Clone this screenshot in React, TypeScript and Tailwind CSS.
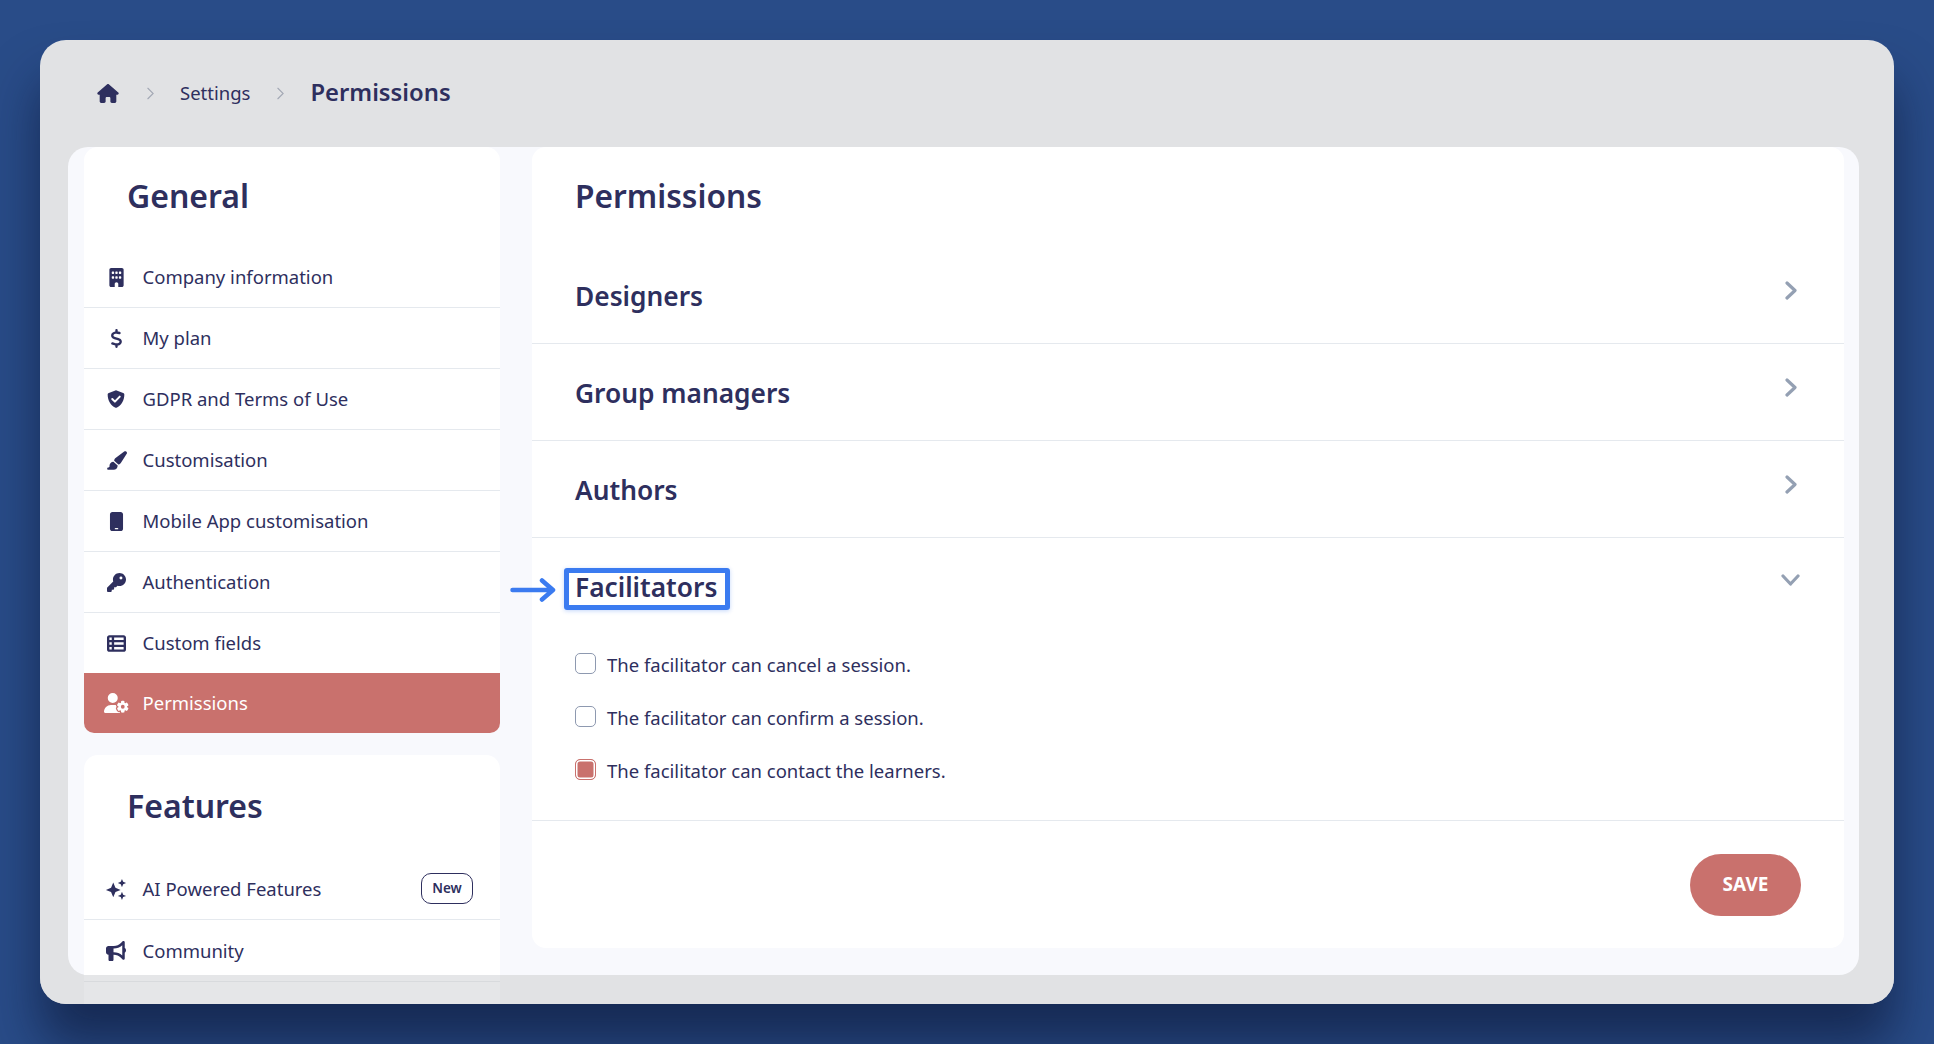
import type { ReactNode } from "react";
import {
  FaBuilding,
  FaBullhorn,
  FaDollarSign,
  FaHouse,
  FaKey,
  FaMobile,
  FaPaintbrush,
  FaTableList,
  FaUserGear,
} from "react-icons/fa6";

function ShieldCheckIcon() {
  return (
    <svg viewBox="0 0 24 24" className="h-[20px] w-[20px]">
      <path
        fill="currentColor"
        d="M12 1.500l8.600 3.200c.8.300 1.400 1 1.400 1.900 0 6.600-3.200 13-9.400 15.800-.4.200-.8.200-1.200 0C5.200 19.600 2 13.200 2 6.600c0-.9.600-1.600 1.400-1.900L12 1.500z"
      />
      <path d="M7.500 12l3.200 3.200 5.800-6" fill="none" stroke="#fff" strokeWidth="2.400" strokeLinecap="round" strokeLinejoin="round" />
    </svg>
  );
}

function SparklesIcon() {
  return (
    <svg viewBox="0 0 24 24" className="h-[22px] w-[22px]" fill="currentColor">
      <path d="M9 5l2.400 5.600L17 13l-5.600 2.400L9 21l-2.400-5.600L1 13l5.600-2.400z" />
      <path d="M18.500 1l1.300 3.200 3.200 1.300-3.200 1.300-1.300 3.200-1.300-3.200L14 5.500l3.200-1.300z" />
      <path d="M18.500 15l1.300 3.200 3.200 1.300-3.200 1.300-1.300 3.200-1.300-3.200-3.200-1.300 3.200-1.300z" />
    </svg>
  );
}

function CrumbChevron() {
  return (
    <svg viewBox="0 0 8 14" className="h-[13px] w-[7px]" fill="none" stroke="#a3a8b5" strokeWidth="1.300" strokeLinecap="round">
      <path d="M1 1l6 6-6 6" />
    </svg>
  );
}

function ChevronRight() {
  return (
    <svg viewBox="0 0 12 19" className="mb-[10px] h-[19px] w-[12px]" fill="none" stroke="#94a0b3" strokeWidth="3.200" strokeLinecap="round" strokeLinejoin="round">
      <path d="M2 2l8 7.500-8 7.500" />
    </svg>
  );
}

function ChevronDown() {
  return (
    <svg viewBox="0 0 19 13" className="mt-[6px] h-[13px] w-[19px]" fill="none" stroke="#94a0b3" strokeWidth="3.200" strokeLinecap="round" strokeLinejoin="round">
      <path d="M2 2l7.500 8L17 2" />
    </svg>
  );
}

const generalItems: { label: string; icon: ReactNode }[] = [
  { label: "Company information", icon: <FaBuilding className="h-[19px] w-[19px]" /> },
  { label: "My plan", icon: <FaDollarSign className="h-[19px] w-[19px]" /> },
  { label: "GDPR and Terms of Use", icon: <ShieldCheckIcon /> },
  { label: "Customisation", icon: <FaPaintbrush className="h-[19px] w-[21px]" /> },
  { label: "Mobile App customisation", icon: <FaMobile className="h-[19px] w-[19px]" /> },
  { label: "Authentication", icon: <FaKey className="h-[19px] w-[19px]" /> },
];

function NavRow({ icon, label, children }: { icon: ReactNode; label: string; children?: ReactNode }) {
  return (
    <div className="flex h-[61px] items-center gap-[13.500px] border-b border-[#e5e9ee] pl-[19px] pr-[27px]">
      <span className="flex w-[26px] justify-center">{icon}</span>
      <span className="flex-1 text-[18.500px]">{label}</span>
      {children}
    </div>
  );
}

function Section({ title }: { title: string }) {
  return (
    <div className="flex h-[97px] items-center justify-between border-b border-[#e5e9ee] pl-[43px] pr-[47px]">
      <h2 className="pt-[3px] text-[26.300px] font-semibold">{title}</h2>
      <ChevronRight />
    </div>
  );
}

function PermissionOption({ label, checked }: { label: string; checked?: boolean }) {
  return (
    <label className="flex h-[21px] items-center gap-[11px] text-[18.500px]">
      {checked ? (
        <span className="h-[21px] w-[21px] rounded-[5px] border border-[#c9716d] bg-[#c9716d] shadow-[inset_0_0_0_1.500px_#fff]" />
      ) : (
        <span className="h-[21px] w-[21px] rounded-[5px] border border-[#8e99b0] bg-white" />
      )}
      <span className="pt-[2px]">{label}</span>
    </label>
  );
}

export default function App() {
  return (
    <div className="h-screen overflow-hidden bg-[#294c88] pb-[40px] pl-[40px] pr-[40px] pt-[40px] font-['Noto_Sans',sans-serif] text-[#2e2f5e]">
      <div className="relative h-[964px] overflow-hidden rounded-[26px] bg-[#e1e2e4] shadow-[0_40px_50px_rgba(10,20,50,0.6)]">
        {/* breadcrumb */}
        <div className="flex h-[107px] items-center pl-[57px]">
          <FaHouse className="h-[19px] w-[22px]" />
          <span className="ml-[28px] flex"><CrumbChevron /></span>
          <span className="ml-[26px] pb-[2px] text-[18.500px]">Settings</span>
          <span className="ml-[27px] flex"><CrumbChevron /></span>
          <span className="ml-[26px] pb-[1px] text-[23.800px] font-semibold">Permissions</span>
        </div>

        <div className="ml-[28px] mr-[35px] flex h-[828px] gap-[32px] rounded-[20px] bg-[#f8f9fd] pl-[16px] pr-[15px]">
          {/* sidebar */}
          <div className="flex w-[416px] flex-none flex-col gap-[22px]">
            <div className="rounded-t-[14px] rounded-b-[10px] bg-white">
              <h2 className="flex h-[100px] items-center pb-[2px] pl-[43px] text-[32px] font-semibold">General</h2>
              {generalItems.map((item) => (
                <NavRow key={item.label} icon={item.icon} label={item.label} />
              ))}
              <div className="flex h-[60px] items-center gap-[13.500px] pl-[19px]">
                <span className="flex w-[26px] justify-center"><FaTableList className="h-[19px] w-[19px]" /></span>
                <span className="text-[18.500px]">Custom fields</span>
              </div>
              <div className="flex h-[60px] items-center gap-[13.500px] rounded-b-[10px] bg-[#c9716d] pl-[19px] text-white">
                <span className="flex w-[26px] justify-center"><FaUserGear className="h-[20px] w-[25px]" /></span>
                <span className="text-[18.500px]">Permissions</span>
              </div>
            </div>

            <div className="rounded-t-[14px] bg-white">
              <h2 className="flex h-[104px] items-center pb-[3px] pl-[43px] text-[32px] font-semibold">Features</h2>
              <NavRow icon={<SparklesIcon />} label="AI Powered Features">
                <span className="mb-[1px] flex h-[31px] w-[52px] items-center justify-center rounded-[10px] border-[1.500px] border-[#2e2f5e] text-[13.500px] font-semibold">
                  New
                </span>
              </NavRow>
              <div className="flex h-[62px] items-center gap-[13.500px] border-b border-[#a8acb2] pl-[19px]">
                <span className="flex w-[26px] justify-center"><FaBullhorn className="h-[20px] w-[20px]" /></span>
                <span className="text-[18.500px]">Community</span>
              </div>
              {/* next row, only the top of its icon shows before the window ends */}
              <div className="flex h-[61px] items-center pl-[19px]">
                <span className="flex w-[26px] justify-center"><span className="h-[18px] w-[18px] rounded-[4px] bg-[#2e2f5e]" /></span>
              </div>
            </div>
          </div>

          {/* permissions panel */}
          <div className="h-[801px] flex-1 rounded-[14px] bg-white">
            <h1 className="flex h-[100px] items-center pb-[2px] pl-[43px] text-[31.700px] font-semibold">Permissions</h1>
            <Section title="Designers" />
            <Section title="Group managers" />
            <Section title="Authors" />

            <div className="h-[283px] border-b border-[#e5e9ee] pl-[43px] pr-[44px] pt-[30px]">
              <div className="flex items-start justify-between">
                <div className="relative -ml-[11px] flex h-[42px] items-center rounded-[3px] border-[5px] border-[#3b7bf0] pb-[3px] pl-[6px] pr-[8px] shadow-[0_1px_4px_rgba(59,123,240,0.3)]">
                  <h2 className="text-[26.300px] font-semibold">Facilitators</h2>
                  <svg viewBox="0 0 46 24" className="absolute -left-[59px] top-[5px] h-[24px] w-[46px]" fill="none" stroke="#3b7bf0" strokeWidth="4.500" strokeLinecap="round" strokeLinejoin="round">
                    <path d="M2.500 12h40M32 2.500L43 12 32 21.500" />
                  </svg>
                </div>
                <ChevronDown />
              </div>
              <div className="mt-[43px] flex flex-col gap-[32px]">
                <PermissionOption label="The facilitator can cancel a session." />
                <PermissionOption label="The facilitator can confirm a session." />
                <PermissionOption label="The facilitator can contact the learners." checked />
              </div>
            </div>

            <div className="flex justify-end pr-[43px] pt-[33px]">
              <button className="h-[62px] w-[111px] rounded-full bg-[#c9716d] pb-[2px] text-[19px] font-bold text-white">SAVE</button>
            </div>
          </div>
        </div>

        {/* faded strip where the sidebar runs past the panel */}
        <div className="absolute bottom-0 left-0 right-0 h-[29px] bg-[#e1e2e4]/85" />
      </div>
    </div>
  );
}
